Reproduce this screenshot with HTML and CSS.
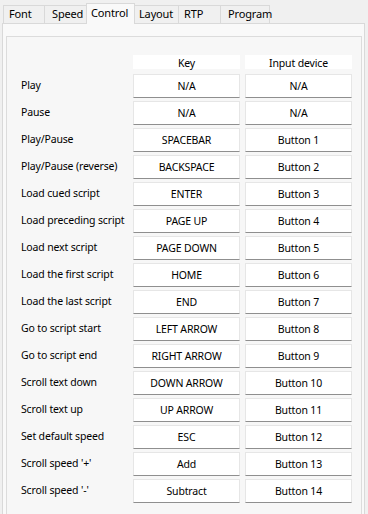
FILE: index.html
```html
<!DOCTYPE html>
<html lang="en">
<head>
  <meta charset="UTF-8">
  <meta name="viewport" content="width=device-width, initial-scale=1.0">
  <title>Settings - Control</title>
  <link rel="stylesheet" href="styles.css">
</head>
<body>
  <div class="tabs">
    <div class="tab tab-font">Font</div>
    <div class="tab tab-speed">Speed</div>
    <div class="tab tab-control active">Control</div>
    <div class="tab tab-layout">Layout</div>
    <div class="tab tab-rtp">RTP</div>
    <div class="tab tab-program">Program</div>
  </div>
  <div class="panel">
    <div class="box">
      <div class="grid">
        <div></div>
        <div class="head">Key</div>
        <div class="head">Input device</div>

        <div class="label">Play</div>
        <div class="cell">N/A</div>
        <div class="cell">N/A</div>

        <div class="label">Pause</div>
        <div class="cell">N/A</div>
        <div class="cell">N/A</div>

        <div class="label">Play/Pause</div>
        <div class="cell">SPACEBAR</div>
        <div class="cell">Button 1</div>

        <div class="label">Play/Pause (reverse)</div>
        <div class="cell">BACKSPACE</div>
        <div class="cell">Button 2</div>

        <div class="label">Load cued script</div>
        <div class="cell">ENTER</div>
        <div class="cell">Button 3</div>

        <div class="label">Load preceding script</div>
        <div class="cell">PAGE UP</div>
        <div class="cell">Button 4</div>

        <div class="label">Load next script</div>
        <div class="cell">PAGE DOWN</div>
        <div class="cell">Button 5</div>

        <div class="label">Load the first script</div>
        <div class="cell">HOME</div>
        <div class="cell">Button 6</div>

        <div class="label">Load the last script</div>
        <div class="cell">END</div>
        <div class="cell">Button 7</div>

        <div class="label">Go to script start</div>
        <div class="cell">LEFT ARROW</div>
        <div class="cell">Button 8</div>

        <div class="label">Go to script end</div>
        <div class="cell">RIGHT ARROW</div>
        <div class="cell">Button 9</div>

        <div class="label">Scroll text down</div>
        <div class="cell">DOWN ARROW</div>
        <div class="cell">Button 10</div>

        <div class="label">Scroll text up</div>
        <div class="cell">UP ARROW</div>
        <div class="cell">Button 11</div>

        <div class="label">Set default speed</div>
        <div class="cell">ESC</div>
        <div class="cell">Button 12</div>

        <div class="label">Scroll speed '+'</div>
        <div class="cell">Add</div>
        <div class="cell">Button 13</div>

        <div class="label">Scroll speed '-'</div>
        <div class="cell">Subtract</div>
        <div class="cell">Button 14</div>
      </div>
    </div>
  </div>
</body>
</html>
```

FILE: styles.css
```css
html, body {
  margin: 0;
  height: 100%;
  overflow: hidden;
}
body {
  font-family: "Noto Sans", "Open Sans", sans-serif;
  font-size: 10.5px;
  letter-spacing: -0.15px;
  color: #000;
  background-color: #f0f0f0;
}
.tabs {
  display: flex;
  align-items: flex-end;
  height: 24px;
  padding-left: 3px;
  position: relative;
  z-index: 1;
}
.tab {
  box-sizing: border-box;
  height: 18px;
  line-height: 16px;
  padding-left: 5px;
  border: 1px solid #d9d9d9;
  border-bottom: none;
  border-right: none;
  background-color: #f0f0f0;
  margin-bottom: 1px;
  font-size: 11px;
}
.tab-font { width: 41px; }
.tab-speed { width: 42px; padding-left: 7px; }
.tab-control { width: 49px; }
.tab-layout { width: 43px; border-left: none; padding-left: 4px; }
.tab-rtp { width: 42px; }
.tab-program { width: 50px; border-right: 1px solid #d9d9d9; padding-left: 7px; }
.tab.active {
  height: 21px;
  line-height: 18px;
  margin-bottom: 0;
  background-color: #f9f9f9;
  border-right: 1px solid #d9d9d9;
  padding-left: 4px;
}
.panel {
  box-sizing: border-box;
  margin-left: 2px;
  margin-top: -1px;
  width: 363px;
  height: 492px;
  overflow: hidden;
  border: 1px solid #d9d9d9;
  background-color: #f9f9f9;
  padding: 12px 0 0 3px;
}
.box {
  box-sizing: border-box;
  width: 356px;
  height: 500px;
  border: 1px solid #dcdcdc;
  background-color: #f7f7f7;
  padding: 18px 0 0 14px;
}
.grid {
  display: grid;
  grid-template-columns: 107px 107px 107px;
  grid-auto-rows: 24px;
  grid-template-rows: 16px;
  column-gap: 5px;
  row-gap: 3px;
}
.head {
  background-color: #fff;
  text-align: center;
  line-height: 16px;
  margin-bottom: 2px;
}
.label {
  line-height: 22px;
  white-space: nowrap;
}
.cell {
  box-sizing: border-box;
  background-color: #fff;
  border: 1px solid #e6e6e6;
  border-bottom-color: #8f8f8f;
  text-align: center;
  line-height: 22px;
  white-space: nowrap;
}
```
